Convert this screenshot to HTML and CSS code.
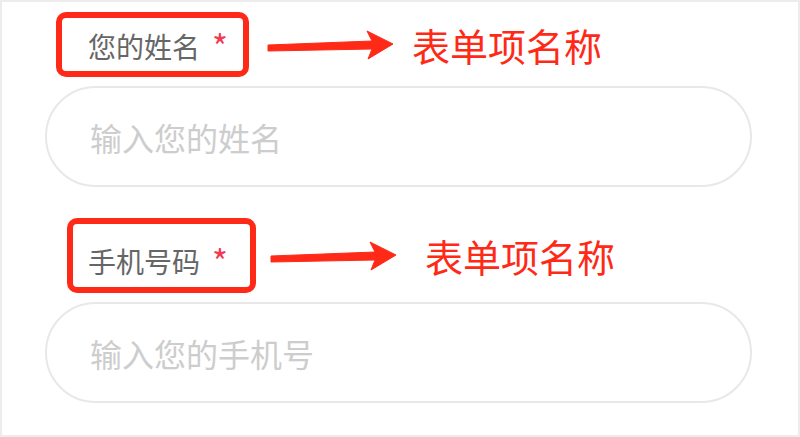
FILE: index.html
```html
<!DOCTYPE html>
<html>
<head>
    <meta charset="utf-8">
    <title>表单项名称</title>
    <link rel="stylesheet" href="styles.css">
</head>
<body>
    <div class="frame">
        <form class="form">
            <div class="note-row note-row-first">
                <label class="note-box" for="name">您的姓名<span class="star">*</span></label>
                <svg class="arrow" width="127" height="32" viewBox="0 0 127 32">
                    <polygon points="2,16 106,12 101,2 127,15 102,30 106,20 2,22" />
                </svg>
                <span class="note-text">表单项名称</span>
            </div>
            <input class="field" type="text" id="name" placeholder="输入您的姓名">

            <div class="note-row note-row-second">
                <label class="note-box" for="phone">手机号码<span class="star">*</span></label>
                <svg class="arrow" width="127" height="32" viewBox="0 0 127 32">
                    <polygon points="2,16 106,12 101,2 127,15 102,30 106,20 2,22" />
                </svg>
                <span class="note-text">表单项名称</span>
            </div>
            <input class="field" type="text" id="phone" placeholder="输入您的手机号">
        </form>
    </div>
</body>
</html>
```

FILE: styles.css
```css
html, body {
    margin: 0;
    padding: 0;
    background: #fff;
}
body {
    font-family: "Noto Sans CJK SC", "Noto Sans", sans-serif;
}
.frame {
    width: 800px;
    height: 437px;
    box-sizing: border-box;
    border: 2px solid #ececec;
    padding: 10px 0 0 43px;
}
.form {
    width: 707px;
}
.note-row {
    display: flex;
    align-items: center;
}
.note-box {
    display: flex;
    align-items: center;
    box-sizing: border-box;
    border: 6px solid #fe2a17;
    border-radius: 10px;
    font-size: 28px;
    line-height: 28px;
    color: #666;
}
.star {
    color: #f23a55;
    margin-left: 12px;
    font-size: 34px;
    line-height: 28px;
}
.note-row-first .note-box {
    margin-left: 11px;
    width: 193px;
    height: 65px;
    padding: 2px 0 0 26px;
}
.note-row-first .arrow {
    margin-left: 17px;
}
.note-row-first .note-text {
    margin-left: 19px;
}
.note-row-second {
    margin-top: 31px;
}
.note-row-second .note-box {
    margin-left: 22px;
    width: 189px;
    height: 75px;
    padding: 10px 0 0 15px;
}
.note-row-second .arrow {
    margin-left: 13px;
}
.note-row-second .note-text {
    margin-left: 29px;
}
.arrow polygon {
    fill: #fe2a17;
    stroke: #fe2a17;
    stroke-width: 1;
    stroke-linejoin: round;
}
.note-text {
    font-size: 38px;
    color: #fe2a17;
    line-height: 1;
}
.field {
    display: block;
    width: 707px;
    height: 101px;
    box-sizing: border-box;
    margin-top: 9px;
    padding: 0 0 0 43px;
    border: 2px solid #e8e8e8;
    border-radius: 51px;
    font-family: inherit;
    font-size: 32px;
    color: #333;
    outline: none;
    background: #fff;
}
.field::placeholder {
    color: #cdcdcd;
}
```
